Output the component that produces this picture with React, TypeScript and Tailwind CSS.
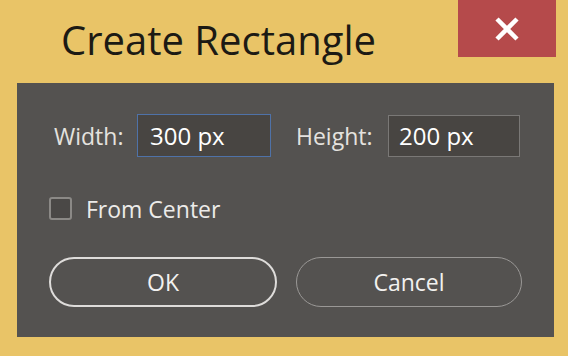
import React from 'react';

const font = { fontFamily: '"Open Sans", "Noto Sans", sans-serif' };

const App: React.FC = () => {
  return (
    <div className="w-[568px] h-[356px] bg-[#e9c467] flex flex-col overflow-hidden" style={font}>
      {/* Header */}
      <div className="h-[83px] flex items-start">
        <h1 className="ml-[61px] mt-[13px] text-[40px] leading-[54px] text-[#1c1a14] font-normal">
          Create Rectangle
        </h1>
        <button className="ml-auto mr-[12px] w-[98px] h-[57px] bg-[#b54a4b] flex items-center justify-center">
          <svg width="28" height="28" viewBox="0 0 28 28">
            <path d="M4 4 L24 24 M24 4 L4 24" stroke="#ffffff" strokeWidth="4.5" strokeLinecap="butt" />
          </svg>
        </button>
      </div>

      {/* Panel */}
      <div className="ml-[17px] w-[537px] h-[254px] bg-[#545250] flex flex-col pt-[31px] pl-[32px]">
        <div className="flex items-center h-[43px]">
          <span className="ml-[5px] text-[23px] leading-[30px] text-[#e4e2df] w-[83px]">Width:</span>
          <div className="w-[134px] h-[43px] bg-[#484542] border border-[#4f72a8] flex items-center pl-[12px] text-[24px] leading-[30px] text-white">
            300 px
          </div>
          <span className="ml-[25px] text-[23px] leading-[30px] text-[#e4e2df] w-[92px]">Height:</span>
          <div className="w-[132px] h-[42px] bg-[#484542] border border-[#7a7876] flex items-center pl-[10px] text-[24px] leading-[30px] text-white">
            200 px
          </div>
        </div>

        <div className="flex items-center mt-[40px] h-[23px]">
          <div className="w-[23px] h-[23px] rounded-[3px] border-2 border-[#8b8986] bg-[#4a4846]" />
          <span className="ml-[14px] text-[23px] leading-[30px] text-[#ecebe9]">From Center</span>
        </div>

        <div className="flex mt-[37px]">
          <button className="w-[228px] h-[50px] rounded-full border-2 border-[#dedcda] text-[23px] leading-[30px] text-[#f2f1ef]">
            OK
          </button>
          <button className="ml-[19px] w-[226px] h-[50px] rounded-full border border-[#9a9896] text-[23px] leading-[30px] text-[#f2f1ef]">
            Cancel
          </button>
        </div>
      </div>
    </div>
  );
};

export default App;
